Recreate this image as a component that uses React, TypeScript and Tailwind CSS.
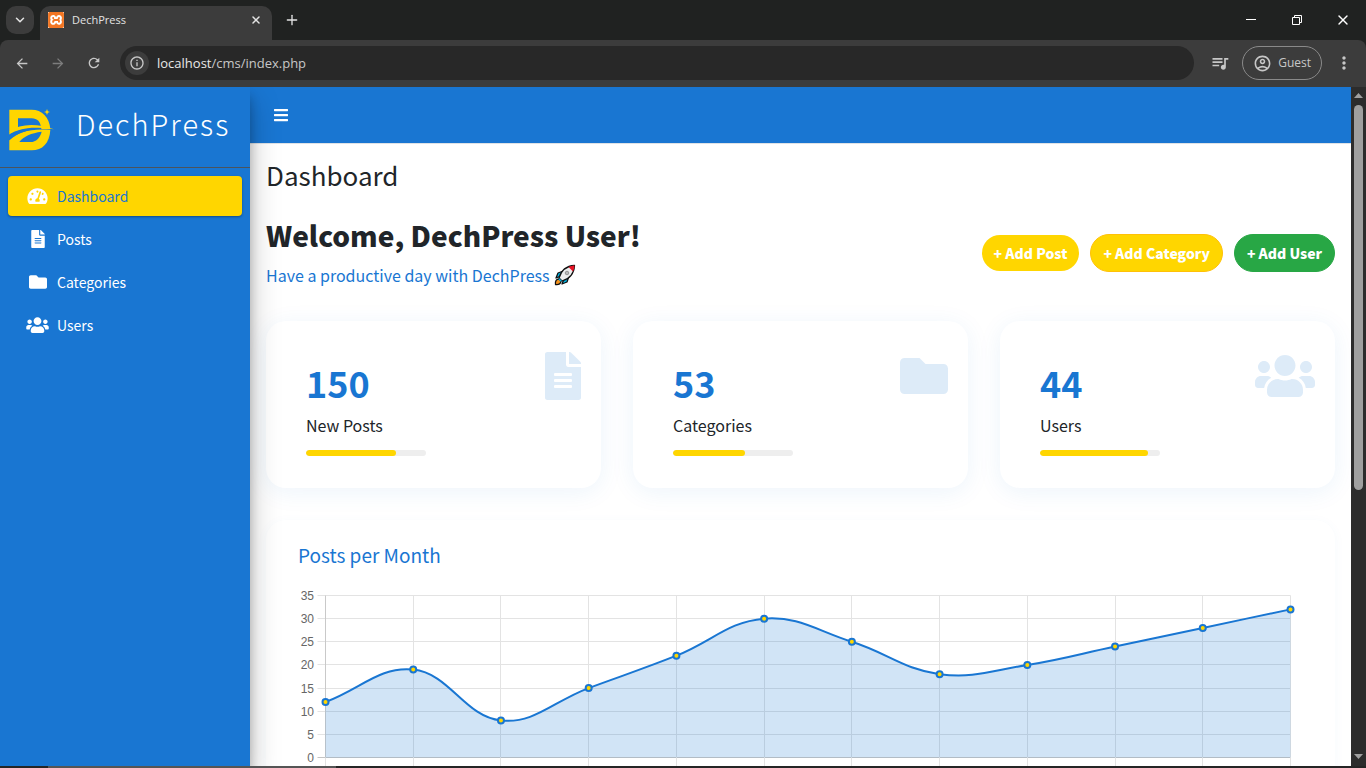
import type { ReactNode } from 'react';
import {
  FaBars,
  FaFileAlt,
  FaFolder,
  FaTachometerAlt,
  FaUsers,
} from 'react-icons/fa';
import {
  MdArrowBack,
  MdArrowForward,
  MdMoreVert,
  MdOutlineAccountCircle,
  MdOutlineInfo,
  MdQueueMusic,
  MdRefresh,
} from 'react-icons/md';
import { SiXampp } from 'react-icons/si';
import { ChevronDown, Plus, X } from 'lucide-react';

function RestoreIcon() {
  return (
    <svg width="12" height="12" viewBox="0 0 12 12" fill="none" stroke="currentColor">
      <path d="M1.5 3.5h7v7h-7zM3.5 3.5v-2h7v7h-2" />
    </svg>
  );
}

function MinimizeIcon() {
  return (
    <svg width="10" height="12" viewBox="0 0 10 12" stroke="currentColor">
      <path d="M0 5.5H10" />
    </svg>
  );
}

function BrowserChrome() {
  return (
    <header className="shrink-0 bg-[#202221] font-['Open_Sans','Noto_Sans',sans-serif] text-[#e3e3e3]">
      <div className="flex h-10 items-end">
        <div className="flex h-10 items-center pl-[6px] pr-[6px]">
          <button aria-label="Search tabs" className="flex size-7 items-center justify-center rounded-[10px] bg-[#3c3c3c]">
            <ChevronDown size={14} strokeWidth={2.6} />
          </button>
        </div>
        <div className="flex h-[34px] w-[232px] items-center rounded-t-[10px] bg-[#3c3c3c] pb-[6px] pl-2 pr-[10px]">
          <span className="flex size-4 items-center justify-center bg-white text-[#f37623]">
            <SiXampp size={16} />
          </span>
          <span className="ml-2 flex-1 text-[11px] leading-4">DechPress</span>
          <button aria-label="Close tab">
            <X size={12} strokeWidth={3} />
          </button>
        </div>
        <button aria-label="New tab" className="ml-3 flex h-10 items-center">
          <Plus size={16} strokeWidth={2} />
        </button>
        <div className="ml-auto flex h-10 items-center text-white">
          <button aria-label="Minimize" className="flex w-[46px] justify-center">
            <MinimizeIcon />
          </button>
          <button aria-label="Restore" className="flex w-[46px] justify-center">
            <RestoreIcon />
          </button>
          <button aria-label="Close" className="flex w-[46px] justify-center">
            <X size={16} strokeWidth={2} />
          </button>
        </div>
      </div>
      <div className="flex h-[47px] items-center rounded-t-[8px] bg-[#3c3c3c] pb-px pl-[14px] pr-3 text-[#c7c7c7]">
        <button aria-label="Back" className="flex w-4 justify-center">
          <MdArrowBack size={17} />
        </button>
        <button aria-label="Forward" className="ml-5 flex w-4 justify-center text-[#7d7d7d]">
          <MdArrowForward size={17} />
        </button>
        <button aria-label="Reload" className="ml-5 flex w-4 justify-center">
          <MdRefresh size={18} />
        </button>
        <div className="ml-[18px] flex h-[34px] flex-1 items-center rounded-full bg-[#282828] pl-[5px]">
          <span className="flex size-6 items-center justify-center rounded-full bg-[#3c3c3c]">
            <MdOutlineInfo size={16} />
          </span>
          <span className="ml-2 text-[13px] leading-5">
            <span className="text-[#e8e8e8]">localhost</span>/cms/index.php
          </span>
        </div>
        <button aria-label="Media controls" className="ml-4">
          <MdQueueMusic size={20} />
        </button>
        <button className="ml-3 flex h-[34px] items-center rounded-full border border-[#8a8a8a] px-[10px]">
          <MdOutlineAccountCircle size={19} />
          <span className="ml-[6px] text-[12px] leading-4">Guest</span>
        </button>
        <button aria-label="Menu" className="ml-3">
          <MdMoreVert size={20} />
        </button>
      </div>
    </header>
  );
}

function Logo() {
  return (
    <svg width="48" height="45" viewBox="24 60 144 135" fill="#ffd600" aria-hidden="true">
      <path d="M28 68H95C126 68 148 90 151 126H124C122 104 112 94 95 94H54V124L28 134Z" />
      <path d="M28 133C62 110 108 108 162 127C104 118 58 126 28 144Z" />
      <path d="M28 160C52 134 92 124 151 128C149 168 127 190 95 190H28Z" />
      <path d="M58 165C70 148 94 138 125 134C120 153 108 165 92 165Z" fill="#1976d2" />
      <path d="M28 142C52 126 90 119 126 123C84 127 52 138 28 160Z" fill="#1976d2" />
      <path d="M141 66L143.500 72.500L150 75L143.500 77.500L141 84L138.500 77.500L132 75L138.500 72.500Z" />
    </svg>
  );
}

type NavItem = { label: string; icon: ReactNode; active?: boolean };

const navItems: NavItem[] = [
  { label: 'Dashboard', icon: <FaTachometerAlt className="h-[18px] w-[21px]" />, active: true },
  { label: 'Posts', icon: <FaFileAlt className="h-[18px] w-[14px]" /> },
  { label: 'Categories', icon: <FaFolder className="h-[18px] w-5" /> },
  { label: 'Users', icon: <FaUsers className="h-[18px] w-[23px]" /> },
];

function Sidebar() {
  return (
    <aside className="relative z-10 w-[250px] shrink-0 bg-[#1976d2] shadow-[0_14px_28px_rgba(0,0,0,0.25),0_10px_10px_rgba(0,0,0,0.22)]">
      <a href="#home" className="flex h-[81px] items-center border-b border-[#4b545c] pt-1 pl-2 text-white">
        <Logo />
        <span className="ml-[20px] pb-3 text-[29px] leading-10 font-light tracking-[2px]">DechPress</span>
      </a>
      <nav className="flex flex-col gap-[3px] p-2">
        {navItems.map((item) => (
          <a
            key={item.label}
            href={'#' + item.label.toLowerCase()}
            className={
              item.active
                ? 'flex h-10 items-center rounded bg-[#ffd600] px-4 text-[#1976d2] shadow-[0_1px_3px_rgba(0,0,0,0.12),0_1px_2px_rgba(0,0,0,0.24)]'
                : 'flex h-10 items-center rounded px-4 text-white'
            }
          >
            <span className="flex w-[27px] justify-center text-white">{item.icon}</span>
            <span className="ml-[6px] text-[14px] leading-6">{item.label}</span>
          </a>
        ))}
      </nav>
    </aside>
  );
}

function Rocket() {
  return (
    <svg width="22" height="22" viewBox="0 0 22 22" role="img" aria-label="rocket" stroke="#111" strokeWidth="1.300" strokeLinejoin="round">
      <path d="M2 14L4 9L8 7.500L7 12Z" fill="#00b7e8" />
      <path d="M8 20L13 18L14.500 13.500L10 15Z" fill="#00b7e8" />
      <path d="M1.500 20.500C1 17 2.500 15 5 15L7 17C7 19.500 5 21 1.500 20.500Z" fill="#f7941d" />
      <path d="M5 14C7 7 12 2 20.500 1.500C20 10 15 15 8 17Z" fill="#eee" />
      <path d="M14.500 3C17 2 19 1.500 20.500 1.500C20.500 3 20 5 19 7.500Z" fill="#e81224" stroke="none" />
      <path d="M5 14L8 17L6.500 17.500L4.500 15.500Z" fill="#00b7e8" stroke="none" />
      <circle cx="13" cy="9" r="1.800" fill="#bbb" stroke="#888" strokeWidth="0.800" />
    </svg>
  );
}

type Stat = { value: number; label: string; percent: number; icon: ReactNode };

const stats: Stat[] = [
  { value: 150, label: 'New Posts', percent: 75, icon: <FaFileAlt className="h-12 w-9" /> },
  { value: 53, label: 'Categories', percent: 60, icon: <FaFolder className="size-12" /> },
  { value: 44, label: 'Users', percent: 90, icon: <FaUsers className="h-12 w-[60px]" /> },
];

function StatCard({ stat }: { stat: Stat }) {
  return (
    <section className="flex h-[167px] justify-between rounded-[20px] bg-white pl-10 pr-5 shadow-[0_4px_24px_rgba(25,118,210,0.08)]">
      <div className="pt-[38px]">
        <div className="text-[36px] leading-[46px] font-bold text-[#1976d2]">{stat.value}</div>
        <div className="mt-2 text-[16px] leading-6">{stat.label}</div>
        <div className="mt-[13px] h-[6px] w-[120px] overflow-hidden rounded-[3px] bg-[#eeeeee]">
          <div className="h-full rounded-[3px] bg-[#ffd600]" style={{ width: stat.percent + '%' }} />
        </div>
      </div>
      <div className="pt-[31px] text-[#1976d2]/15">{stat.icon}</div>
    </section>
  );
}

const monthly = [12, 19, 8, 15, 22, 30, 25, 18, 20, 24, 28, 32];
const ticks = [0, 5, 10, 15, 20, 25, 30, 35];
const LEFT = 27.5;
const RIGHT = 992.5;
const TOP = 12.5;
const BOTTOM = 174.5;

const px = (i: number) => LEFT + (i * (RIGHT - LEFT)) / (monthly.length - 1);
const py = (v: number) => BOTTOM - (v * (BOTTOM - TOP)) / 35;

function curve() {
  const pts = monthly.map((v, i) => ({ x: px(i), y: py(v) }));
  const controls = pts.map((p, i) => {
    const prev = pts[Math.max(i - 1, 0)];
    const next = pts[Math.min(i + 1, pts.length - 1)];
    const a = Math.hypot(p.x - prev.x, p.y - prev.y);
    const b = Math.hypot(next.x - p.x, next.y - p.y);
    const fa = (0.4 * a) / (a + b);
    const fb = (0.4 * b) / (a + b);
    return {
      inX: p.x - fa * (next.x - prev.x),
      inY: p.y - fa * (next.y - prev.y),
      outX: p.x + fb * (next.x - prev.x),
      outY: p.y + fb * (next.y - prev.y),
    };
  });
  let d = `M${pts[0].x} ${pts[0].y}`;
  for (let i = 1; i < pts.length; i++) {
    const c0 = controls[i - 1];
    const c1 = controls[i];
    d += `C${c0.outX} ${c0.outY} ${c1.inX} ${c1.inY} ${pts[i].x} ${pts[i].y}`;
  }
  return d;
}

function PostsChart() {
  const line = curve();
  return (
    <svg viewBox="0 0 1005 200" className="mt-3 block w-full" role="img" aria-label="Posts per Month">
      {ticks.map((t) => {
        const y = Math.floor(py(t)) + 0.5;
        return (
          <g key={t}>
            <path d={`M${LEFT - 8} ${y}H${RIGHT}`} stroke={t === 0 ? '#c4c4c4' : '#e3e3e3'} />
            <text x="16" y={y + 4} textAnchor="end" fontSize="12" fill="#666" className="font-['Liberation_Sans',sans-serif]">
              {t}
            </text>
          </g>
        );
      })}
      {monthly.map((_, i) => {
        const x = Math.floor(px(i)) + 0.5;
        return <path key={i} d={`M${x} ${TOP}V${BOTTOM + 16}`} stroke="#e3e3e3" />;
      })}
      <path d={`M${LEFT} ${TOP}V${BOTTOM}`} stroke="#c9c9c9" />
      <path d={`${line}V${BOTTOM}H${LEFT}Z`} fill="#1976d2" fillOpacity="0.2" />
      <path d={line} fill="none" stroke="#1976d2" strokeWidth="2" />
      {monthly.map((v, i) => (
        <circle key={i} cx={px(i)} cy={py(v)} r="3" fill="#ffd600" stroke="#1976d2" strokeWidth="2" />
      ))}
    </svg>
  );
}

function Scrollbar() {
  return (
    <div className="flex w-[15px] shrink-0 flex-col items-center bg-[#2c2c2c] pt-[6px] pb-[7px]" aria-hidden="true">
      <svg width="9" height="5" viewBox="0 0 9 5" fill="#9f9f9f"><path d="M0 5L4.500 0L9 5Z" /></svg>
      <div className="mt-[7px] h-[385px] w-[9px] rounded-full bg-[#9f9f9f]" />
      <svg className="mt-auto" width="9" height="5" viewBox="0 0 9 5" fill="#9f9f9f"><path d="M0 0L4.500 5L9 0Z" /></svg>
    </div>
  );
}

export default function App() {
  return (
    <div className="flex h-screen flex-col overflow-hidden bg-white">
      <BrowserChrome />
      <div className="flex min-h-0 flex-1 overflow-hidden font-['Noto_Sans_CJK_JP',sans-serif] text-[#212529]">
        <Sidebar />
        <div className="min-w-0 flex-1 overflow-hidden">
          <div className="flex h-[57px] items-center border-b border-[#dee2e6] bg-[#1976d2] px-6 text-white">
            <button aria-label="Toggle sidebar">
              <FaBars className="h-4 w-[14px]" />
            </button>
          </div>
          <main className="px-4 pt-[13px]">
            <h1 className="text-[26px] leading-9">Dashboard</h1>
            <div className="mt-6 flex items-center justify-between">
              <div className="pb-[2px]">
                <h2 className="text-[28px] leading-9 font-black">Welcome, DechPress User!</h2>
                <p className="mt-[10px] flex items-center gap-1 text-[16px] leading-6 text-[#1976d2]">
                  Have a productive day with DechPress <Rocket />
                </p>
              </div>
              <div className="flex items-center gap-[11px] text-[14px] leading-6 font-black text-white">
                <button className="h-9 rounded-full bg-[#ffd600] px-3">+ Add Post</button>
                <button className="h-[38px] rounded-full border border-[#ffc107] bg-[#ffd600] px-3">+ Add Category</button>
                <button className="h-[38px] rounded-full border border-[#28a745] bg-[#28a745] px-3">+ Add User</button>
              </div>
            </div>
            <div className="mt-8 grid grid-cols-3 gap-8">
              {stats.map((s) => (
                <StatCard key={s.label} stat={s} />
              ))}
            </div>
            <section className="mt-8 rounded-[20px] bg-white px-8 pt-[19px] shadow-[0_2px_12px_rgba(25,118,210,0.04)]">
              <h3 className="text-[19px] leading-8 text-[#1976d2]">Posts per Month</h3>
              <PostsChart />
            </section>
          </main>
        </div>
        <Scrollbar />
      </div>
      <div className="flex h-[2px] shrink-0 bg-[#252525]">
        <div className="ml-12 w-[288px] bg-[#555555]" />
      </div>
    </div>
  );
}
